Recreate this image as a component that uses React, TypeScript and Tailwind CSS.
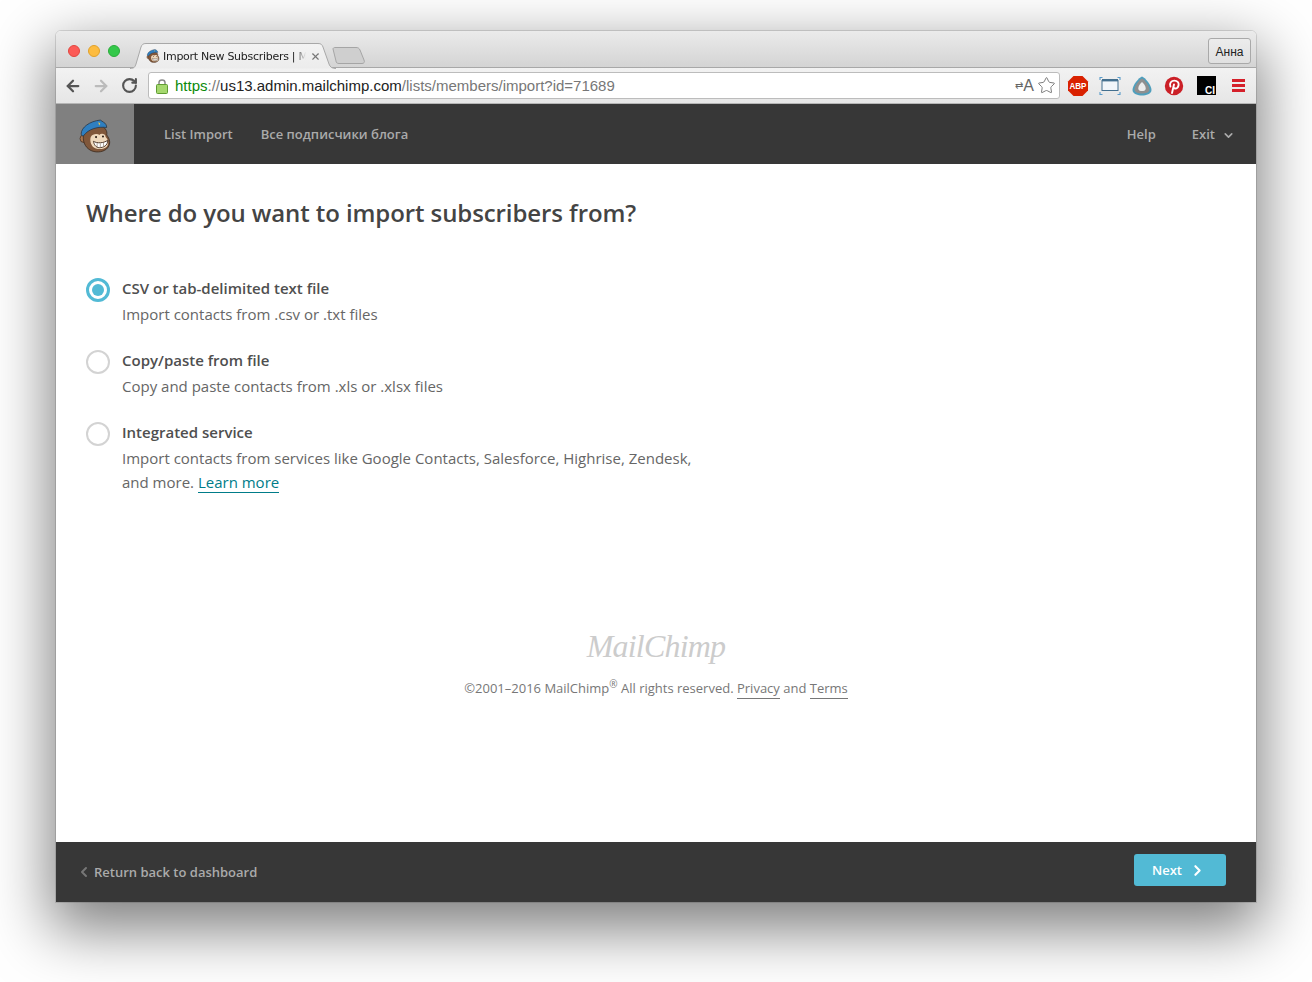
import { ChevronDown, ChevronLeft, ChevronRight, Star, ArrowLeft, ArrowRight, RotateCw, X } from "lucide-react";

function Monkey({ size }: { size: number }) {
  return (
    <svg width={size} height={size} viewBox="0 0 32 32">
      <circle cx="5.5" cy="18.5" r="3.6" fill="#a9764f" stroke="#4a3527" strokeWidth="0.8" />
      <path d="M5 12 C6 7 13 5 20 6 C25 7 28 11 27 15 C30 19 31 23 28 27 C25 31 18 32 13 30 C8 28 5 23 5 18 Z" fill="#80573a" stroke="#3f2e22" strokeWidth="0.8" />
      <path d="M12 17 C14 13 19 14 20 15 C22 13 26 14 26 17 C29 20 29 24 27 26 C24 29 17 29 14 26 C12 24 11 20 12 17 Z" fill="#efd9bd" />
      <path d="M3 14 C3 8 11 2 21 1 L24 3 C26 4 27 6 27 8 C19 7 10 9 5 16 C4 16 3 15 3 14 Z" fill="#2f7fc0" stroke="#2b3a4a" strokeWidth="0.8" />
      <path d="M19 3 l2 1 l-1 2 z" fill="#e8c34a" />
      <path d="M14.5 21 C18 23 24 23 28 20 C28 25 24 27 20 27 C17 27 15 24 14.5 21 Z" fill="#fff" stroke="#4a3527" strokeWidth="0.9" />
      <path d="M18 22.5 v4 M21 23 v4 M24 22.5 v3.5" stroke="#8a7766" strokeWidth="0.6" />
      <circle cx="17" cy="17" r="1" fill="#33251b" />
      <circle cx="23.5" cy="16.5" r="1" fill="#33251b" />
    </svg>
  );
}

function Tab() {
  return (
    <div className="relative ml-[74px] mt-[12px] h-[25px] w-[206px] flex items-center pl-[16px]">
      <svg className="absolute left-0 top-0" width="206" height="26" viewBox="0 0 206 26">
        <defs>
          <linearGradient id="tabfill" x1="0" y1="0" x2="0" y2="1">
            <stop offset="0" stopColor="#f3f3f3" />
            <stop offset="1" stopColor="#ececec" />
          </linearGradient>
        </defs>
        <path d="M0 25.5 C4 25.5 5 24 6 21 L11 4 C12 1.5 13 0.5 16 0.5 L188 0.5 C191 0.5 192 1.5 193 4 L199 21 C200 24 202 25.5 206 25.5" fill="url(#tabfill)" stroke="#a8a8a8" />
      </svg>
      <div className="relative flex items-center pt-[1px]">
        <Monkey size={14} />
        <span className="ml-[3px] w-[143px] whitespace-nowrap pt-[2px] text-[11px] text-[#222] [font-family:'DejaVu_Sans',sans-serif] tracking-[-0.28px] [mask-image:linear-gradient(to_right,black_92%,transparent)]">
          Import New Subscribers | M
        </span>
        <X size={11} strokeWidth={2.5} className="ml-[4px] text-[#777]" />
      </div>
      <svg className="absolute left-[201px] top-[4px]" width="36" height="21" viewBox="0 0 36 21">
        <path d="M2 2 C2 1 3 0.5 4 0.5 L25 0.5 C27 0.5 28 1 29 3 L33 13 C34 15 33 16.5 31 16.5 L8 16.5 C6 16.5 5 15.5 5 14 Z" fill="#cfcfcf" stroke="#a5a5a5" />
      </svg>
    </div>
  );
}

function ToolbarIcons() {
  return (
    <div className="flex items-center ml-[7px]">
      <svg width="22" height="22" viewBox="0 0 22 22">
        <path d="M6.5 1 H15.5 L21 6.5 V15.5 L15.5 21 H6.5 L1 15.5 V6.5 Z" fill="#d92100" />
        <text x="11" y="14.2" textAnchor="middle" fontSize="9" fontWeight="700" fill="#fff" fontFamily="Liberation Sans, sans-serif" textLength="17" lengthAdjust="spacingAndGlyphs">ABP</text>
      </svg>
      <svg width="22" height="20" viewBox="0 0 22 20" className="ml-[10px]">
        <rect x="3" y="4.5" width="16" height="10" fill="#f2f6fa" stroke="#44708f" strokeWidth="1" />
        <rect x="3" y="3" width="16" height="2.4" fill="#44708f" />
        <path d="M1 4 V1.5 H3.5 M21 4 V1.5 H18.5 M1 16 V18.5 H3.5 M21 16 V18.5 H18.5" fill="none" stroke="#5a9bc9" strokeWidth="1.1" />
      </svg>
      <svg width="20" height="20" viewBox="0 0 20 20" className="ml-[11px]">
        <path d="M10 0.5 C13 1.5 19.5 9 19.5 14 C19.5 18 14 19.5 10 19.5 C6 19.5 0.5 18 0.5 14 C0.5 9 7 1.5 10 0.5 Z" fill="#4f9fbd" />
        <path d="M10 2.5 C13 4 17.5 10 17.5 13.5 C17.5 16.8 13 17.5 10 17.5 C7 17.5 2.5 16.8 2.5 13.5 C2.5 10 7 4 10 2.5 Z" fill="#8f8f8f" />
        <path d="M10 6 C12 7.5 14 11 13.7 13 C13.4 14.8 11.5 15 10 15 C8.5 15 6.6 14.8 6.3 13 C6 11 8 7.5 10 6 Z" fill="#ececec" />
      </svg>
      <svg width="20" height="20" viewBox="0 0 20 20" className="ml-[12px]">
        <circle cx="10" cy="10" r="9.2" fill="#cb2027" />
        <path d="M8 17 L10 8.5 M6.4 10.5 C5 7 7.5 4.6 10.4 4.6 C13.2 4.6 15 6.5 14.6 9 C14.2 11.6 12.6 12.8 11 12.5 C10 12.3 9.5 11.7 9.4 11" fill="none" stroke="#fff" strokeWidth="1.9" strokeLinecap="round" />
      </svg>
      <div className="ml-[13px] relative h-[19px] w-[19px] bg-black">
        <span className="absolute right-[1px] bottom-[-1px] text-[10px] leading-[11px] font-bold text-white [font-family:'Liberation_Sans',sans-serif]">CI</span>
      </div>
      <div className="ml-[16px] flex w-[13px] flex-col gap-[2px]">
        <div className="h-[3px] bg-[#d5202a]" />
        <div className="h-[3px] bg-[#d5202a]" />
        <div className="h-[3px] bg-[#d5202a]" />
      </div>
    </div>
  );
}

function Radio({ on }: { on?: boolean }) {
  return on ? (
    <div className="flex h-[24px] w-[24px] shrink-0 items-center justify-center rounded-full border-[3px] border-[#52bad5] bg-white">
      <div className="h-[12px] w-[12px] rounded-full bg-[#52bad5]" />
    </div>
  ) : (
    <div className="h-[24px] w-[24px] shrink-0 rounded-full border-2 border-[#d3d3d3] bg-white" />
  );
}

function Option({ on, title, children }: { on?: boolean; title: string; children: React.ReactNode }) {
  return (
    <div className="flex gap-[12px]">
      <div className="pt-[2px]">
        <Radio on={on} />
      </div>
      <div className="w-[590px]">
        <div className="text-[15px] leading-[24px] font-semibold text-[#4f4f4f] mb-[2px]">{title}</div>
        <div className="text-[15px] leading-[24px] text-[#666]">{children}</div>
      </div>
    </div>
  );
}

export default function App() {
  return (
    <div className="h-[982px] overflow-hidden bg-white pl-[56px] pt-[31px] [font-family:'Open_Sans',sans-serif]">
      <div className="flex h-[871px] w-[1200px] flex-col overflow-hidden rounded-t-[5px] shadow-[0_22px_60px_6px_rgba(0,0,0,0.5)] outline outline-1 outline-[rgba(0,0,0,0.12)]">
        {/* browser tabs */}
        <div className="relative flex h-[37px] shrink-0 bg-gradient-to-b from-[#ebebeb] to-[#d4d4d4] border-b border-[#a8a8a8]">
          <div className="absolute left-[12px] top-[14px] flex gap-[8px]">
            <div className="h-[12px] w-[12px] rounded-full bg-[#fc5b57] border border-[#e2463f]" />
            <div className="h-[12px] w-[12px] rounded-full bg-[#fdbc40] border border-[#e1a12a]" />
            <div className="h-[12px] w-[12px] rounded-full bg-[#34c84a] border border-[#2aac3a]" />
          </div>
          <Tab />
          <div className="ml-auto mr-[5px] mt-[7px] flex h-[26px] w-[43px] items-center justify-center rounded-[3px] border border-[#a9a9a9] bg-gradient-to-b from-[#ececec] to-[#e0e0e0] pt-[2px] text-[12px] text-[#222] [font-family:'Liberation_Sans',sans-serif]">
            Анна
          </div>
        </div>

        {/* url toolbar */}
        <div className="flex h-[36px] shrink-0 items-center bg-gradient-to-b from-[#f2f2f2] to-[#e6e6e6] border-b border-[#b5b5b5] pl-[8px]">
          <ArrowLeft size={18} strokeWidth={3} className="text-[#555]" />
          <ArrowRight size={18} strokeWidth={3} className="ml-[10px] text-[#bbb]" />
          <RotateCw size={17} strokeWidth={3} className="ml-[11px] text-[#555]" />
          <div className="ml-[10px] flex h-[27px] w-[912px] items-center rounded-[3px] border border-[#bcbcbc] bg-white pl-[7px] pr-[3px] text-[15px] [font-family:'Liberation_Sans',sans-serif]">
            <svg width="12" height="16" viewBox="0 0 12 16">
              <path d="M3 7 V4.5 C3 1 9 1 9 4.5 V7" fill="none" stroke="#8a8a8a" strokeWidth="1.5" />
              <rect x="0.5" y="6.5" width="11" height="9" rx="1" fill="#a5d86e" stroke="#5f9c32" />
            </svg>
            <span className="ml-[7px] whitespace-nowrap pt-[2px]">
              <span className="text-[#0a8a0a]">https</span>
              <span className="text-[#777]">://</span>
              <span className="text-[#222]">us13.admin.mailchimp.com</span>
              <span className="text-[#777]">/lists/members/import?id=71689</span>
            </span>
            <span className="ml-auto flex items-center text-[#666]">
              <span className="text-[10px]">⇄</span>
              <span className="text-[16px]">A</span>
            </span>
            <Star size={19} strokeWidth={1.2} className="ml-[3px] text-[#777]" />
          </div>
          <ToolbarIcons />
        </div>

        {/* app nav */}
        <div className="flex h-[60px] shrink-0 items-center bg-[#373737] text-[13px] font-semibold text-[#aaa]">
          <div className="flex h-full w-[78px] items-center justify-center bg-[#808080] pt-[3px]">
            <Monkey size={34} />
          </div>
          <div className="flex h-full flex-1 items-center pt-[2px]">
            <span className="ml-[30px]">List Import</span>
            <span className="ml-[28px]">Все подписчики блога</span>
            <span className="ml-auto">Help</span>
            <span className="ml-[36px]">Exit</span>
            <ChevronDown size={13} strokeWidth={3} className="ml-[7px] mr-[21px]" />
          </div>
        </div>

        {/* content */}
        <div className="flex flex-1 flex-col bg-white px-[30px] pt-[32px]">
          <h1 className="text-[24px] leading-[34px] font-semibold tracking-[-0.09px] text-[#444]">Where do you want to import subscribers from?</h1>
          <div className="mt-[46px] flex flex-col gap-[22px]">
            <Option on title="CSV or tab-delimited text file">Import contacts from .csv or .txt files</Option>
            <Option title="Copy/paste from file">Copy and paste contacts from .xls or .xlsx files</Option>
            <Option title="Integrated service">
              <div>Import contacts from services like Google Contacts, Salesforce, Highrise, Zendesk,</div>
              <div>
                and more. <a className="text-[#007c89] border-b border-[#007c89]">Learn more</a>
              </div>
            </Option>
          </div>
          <div className="mt-[133px] flex flex-col items-center">
            <div className="h-[38px] text-[32px] leading-[38px] italic tracking-[-0.8px] text-[#cccccc] [font-family:'Liberation_Serif',serif]">MailChimp</div>
            <div className="mt-[13px] text-[13px] leading-[20px] text-[#777]">
              ©2001–2016 MailChimp<sup className="text-[10px]">®</sup> All rights reserved.{" "}
              <a className="border-b border-[#777] pb-px">Privacy</a> and <a className="border-b border-[#777] pb-px">Terms</a>
            </div>
          </div>
        </div>

        {/* bottom bar */}
        <div className="flex h-[60px] shrink-0 items-center bg-[#373737] pl-[20px] pr-[30px]">
          <ChevronLeft size={16} strokeWidth={3} className="text-[#777]" />
          <span className="ml-[2px] mt-[2px] text-[13px] font-semibold text-[#aaa]">Return back to dashboard</span>
          <button className="ml-auto mb-[4px] flex h-[32px] w-[92px] items-center rounded-[3px] bg-[#52bad5] pl-[18px] text-[13px] font-semibold text-white">
            <span className="mt-[2px]">Next</span>
            <ChevronRight size={17} strokeWidth={3} className="ml-[7px]" />
          </button>
        </div>
      </div>
    </div>
  );
}
